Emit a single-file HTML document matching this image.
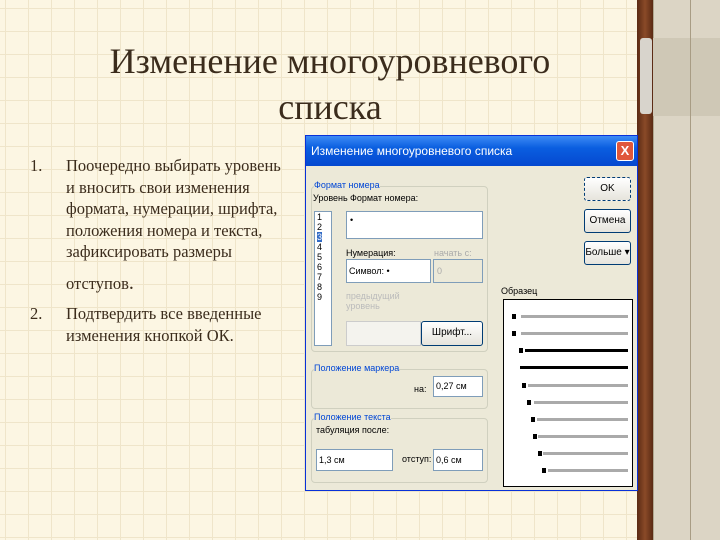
<html><head><style>
*{box-sizing:border-box}
body{margin:0;width:720px;height:540px;overflow:hidden;position:relative;font-family:"Liberation Serif",serif;
background-color:#fcf6e3;
background-image:linear-gradient(#efe5ca 1px,transparent 1px),linear-gradient(90deg,#efe5ca 1px,transparent 1px);
background-size:23px 23px;background-position:5px 8px;}
.t{position:absolute;color:#3b2c1c;}
h1{position:absolute;left:60px;top:38px;width:540px;margin:0;text-align:center;font-weight:normal;font-size:36px;line-height:46px;color:#3b2c1c;}
.p{font-size:16.5px;line-height:21.5px;}
.dlg{position:absolute;left:305px;top:135px;width:333px;height:356px;background:#ece9d8;border:1px solid #0831d9;font-family:"Liberation Sans",sans-serif;font-size:9px;color:#000;}
.tb{position:absolute;left:0;top:0;right:0;height:30px;background:linear-gradient(#3d8bf5,#0a5ee0 40%,#0548d0);color:#fff;font-size:12px;line-height:30px;padding-left:5px;}
.x{position:absolute;right:3px;top:5px;width:18px;height:20px;background:#e0573a;border:1px solid #fff;border-radius:3px;color:#fff;text-align:center;font-size:13px;line-height:18px;font-weight:bold}
.a{position:absolute}
.btn{position:absolute;background:linear-gradient(#fff,#e6e4dc);border:1px solid #003c74;border-radius:3px;text-align:center;line-height:22px;height:24px;font-size:10px}
.box{position:absolute;background:#fff;border:1px solid #7f9db9}
.grp{position:absolute;border:1px solid #d0d0bf;border-radius:4px}
.gt{position:absolute;color:#0046d5;background:#ece9d8;font-size:9px}
.ln{position:absolute;height:3px;background:#aaa}
.lb{position:absolute;height:3px;background:#000}
.d{position:absolute;width:4px;height:5px;background:#000}
</style></head><body>
<h1>Изменение многоуровневого<br>списка</h1>
<div class="t p" style="left:30px;top:155px">1.</div>
<div class="t p" style="left:66px;top:155px">Поочередно выбирать уровень<br>и вносить свои изменения<br>формата, нумерации, шрифта,<br>положения номера и текста,<br>зафиксировать размеры</div>
<div class="t p" style="left:66px;top:273px">отступов<span style="font-size:20px">.</span></div>
<div class="t p" style="left:30px;top:303px">2.</div>
<div class="t p" style="left:66px;top:303px">Подтвердить все введенные<br>изменения кнопкой ОК.</div>
<div class="a" style="left:637px;top:0;width:16px;height:540px;background:linear-gradient(90deg,#5a2a14,#8a4a28,#5a2a14)"></div>
<div class="a" style="left:640px;top:38px;width:12px;height:76px;background:#d8d4cc;border-radius:3px"></div>
<div class="a" style="left:653px;top:0;width:67px;height:540px;background:#dcd5c5;border-left:1px solid #b0a890"></div>
<div class="a" style="left:653px;top:38px;width:67px;height:78px;background:#cfc8b6"></div>
<div class="a" style="left:690px;top:0;width:1px;height:540px;background:#a89c84"></div>
<div class="dlg">
<div class="tb">Изменение многоуровневого списка</div><div class="x">X</div>
<div class="grp" style="left:5px;top:50px;width:177px;height:166px"></div><div class="gt" style="left:8px;top:44px">Формат номера</div>
<div class="a" style="left:7px;top:57px">Уровень</div><div class="a" style="left:44px;top:57px">Формат номера:</div>
<div class="box" style="left:8px;top:75px;width:18px;height:135px;font-size:9px;line-height:10px;padding-left:2px">1<br>2<br><span style="background:#316ac5;color:#fff">3</span><br>4<br>5<br>6<br>7<br>8<br>9</div>
<div class="box" style="left:40px;top:75px;width:137px;height:28px;padding:3px">•</div>
<div class="a" style="left:40px;top:112px">Нумерация:</div><div class="a" style="left:128px;top:112px;color:#aaa">начать с:</div>
<div class="box" style="left:40px;top:123px;width:85px;height:24px;line-height:22px;padding-left:2px">Символ: •</div>
<div class="box" style="left:127px;top:123px;width:50px;height:24px;background:#ece9d8;color:#aaa;line-height:22px;padding-left:3px">0</div>
<div class="a" style="left:40px;top:155px;color:#bbb">предыдущий<br>уровень</div>
<div class="box" style="left:40px;top:185px;width:75px;height:25px;background:#f4f3ee;border-color:#ccc"></div>
<div class="btn" style="left:115px;top:185px;width:62px;height:25px">Шрифт...</div>
<div class="grp" style="left:5px;top:233px;width:177px;height:40px"></div><div class="gt" style="left:8px;top:227px">Положение маркера</div>
<div class="a" style="left:108px;top:248px">на:</div><div class="box" style="left:127px;top:240px;width:50px;height:21px;line-height:19px;padding-left:2px">0,27 см</div>
<div class="grp" style="left:5px;top:282px;width:177px;height:65px"></div><div class="gt" style="left:8px;top:276px">Положение текста</div>
<div class="a" style="left:10px;top:289px">табуляция после:</div>
<div class="box" style="left:10px;top:313px;width:77px;height:22px;line-height:20px;padding-left:2px">1,3 см</div>
<div class="a" style="left:96px;top:318px">отступ:</div>
<div class="box" style="left:127px;top:313px;width:50px;height:22px;line-height:20px;padding-left:2px">0,6 см</div>
<div class="btn" style="left:278px;top:41px;width:47px;border-style:dashed">OK</div>
<div class="btn" style="left:278px;top:73px;width:47px">Отмена</div>
<div class="btn" style="left:278px;top:105px;width:47px">Больше ▾</div>
<div class="a" style="left:195px;top:150px">Образец</div>
<div class="a" style="left:197px;top:163px;width:130px;height:188px;background:#fff;border:1px solid #000"></div>
<div class="d" style="left:206px;top:178px"></div><div class="ln" style="left:215px;top:179px;width:107px"></div>
<div class="d" style="left:206px;top:195px"></div><div class="ln" style="left:215px;top:196px;width:107px"></div>
<div class="d" style="left:213px;top:212px"></div><div class="lb" style="left:219px;top:213px;width:103px"></div>
<div class="lb" style="left:214px;top:230px;width:108px"></div>
<div class="d" style="left:216px;top:247px"></div><div class="ln" style="left:222px;top:248px;width:100px"></div>
<div class="d" style="left:221px;top:264px"></div><div class="ln" style="left:228px;top:265px;width:94px"></div>
<div class="d" style="left:225px;top:281px"></div><div class="ln" style="left:231px;top:282px;width:91px"></div>
<div class="d" style="left:227px;top:298px"></div><div class="ln" style="left:232px;top:299px;width:90px"></div>
<div class="d" style="left:232px;top:315px"></div><div class="ln" style="left:237px;top:316px;width:85px"></div>
<div class="d" style="left:236px;top:332px"></div><div class="ln" style="left:242px;top:333px;width:80px"></div>
</div>
</body></html>
